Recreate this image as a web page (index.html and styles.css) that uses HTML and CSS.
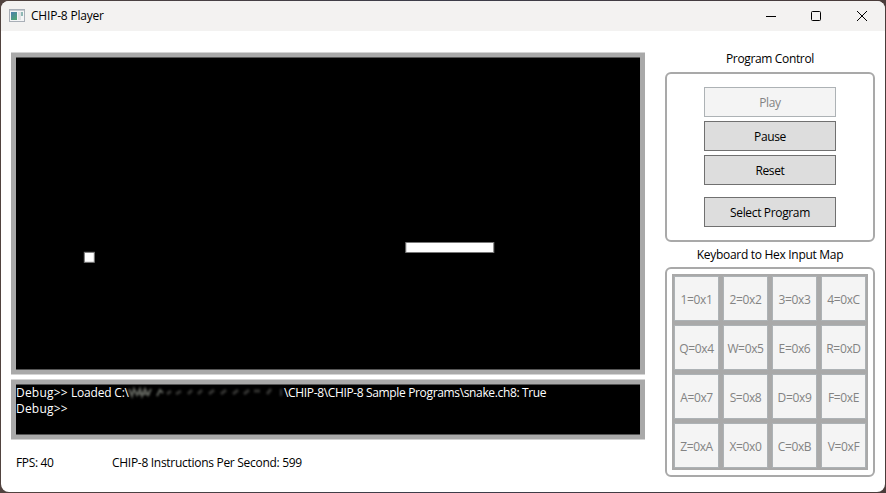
FILE: index.html
```html
<!DOCTYPE html>
<html lang="en">
<head>
<meta charset="utf-8">
<title>CHIP-8 Player</title>
<link rel="stylesheet" href="styles.css">
</head>
<body>
<div class="window">
  <header class="titlebar">
    <svg class="app-icon" width="16" height="14" viewBox="0 0 16 14"><defs><linearGradient id="g" x1="0" y1="0" x2="0.6" y2="1"><stop offset="0" stop-color="#4a7fae"/><stop offset="1" stop-color="#4fa377"/></linearGradient></defs><rect x=".5" y=".5" width="15" height="12" fill="#f4f5f6" stroke="#a9afb7"/><path d="M1 1.5h14" stroke="#c5c9cf"/><rect x="2" y="3" width="6" height="8" fill="url(#g)"/><rect x="9" y="3" width="3" height="8" fill="#e0e2e4"/><rect x="12" y="3" width="2" height="4" fill="#8fb8b5"/></svg>
    <span class="title">CHIP-8 Player</span>
    <svg class="caption" width="104" height="12" viewBox="0 0 104 12" fill="none" stroke="#000"><path d="M1 6.5h10"/><rect x="46.5" y="1.5" width="9" height="9" rx="1"/><path d="M92 1l10 10M102 1l-10 10"/></svg>
  </header>
  <main class="content">
    <section class="left">
      <div class="panel screen"><svg width="624" height="312" viewBox="16 57 624 312" fill="#fff" stroke="#777"><rect x="84.3" y="252.3" width="10" height="10"/><rect x="405.8" y="242.5" width="88" height="10"/></svg></div>
      <div class="panel debug">
        <div class="line"><span class="prompt">Debug&gt;&gt;</span><span class="load">Loaded C:\</span><svg class="smudge" width="156" height="14" viewBox="0 0 156 14" fill="none"><path d="M1 4l3 7 2-7 3 6 3-6 2 7 3-7 3 6 3-6M29 11l3-6 3 3M11 9h11" stroke="#5f625c" stroke-width="2"/><path d="M39 9l4-3m5 3l5-3m7 3l4-4m6 4l4-4m7 4l5-4m7 4l5-4m7 4l5-4m6 4l5-4m5 1h6m7 3l4-5" stroke="#343432" stroke-width="3"/><path d="M153 4v7" stroke="#6b6f75"/></svg><span class="path">\CHIP-8\CHIP-8 Sample Programs\snake.ch8: True</span></div>
        <div class="line"><span class="prompt">Debug&gt;&gt;</span></div>
      </div>
      <footer class="status"><span class="fps">FPS: 40</span><span class="ips">CHIP-8 Instructions Per Second: 599</span></footer>
    </section>
    <aside class="right">
      <h2 class="h-control">Program Control</h2>
      <div class="group controls">
        <button disabled>Play</button><button>Pause</button><button>Reset</button><button class="select">Select Program</button>
      </div>
      <h2 class="h-map">Keyboard to Hex Input Map</h2>
      <div class="group map"><div class="keys">
        <span>1=0x1</span><span>2=0x2</span><span>3=0x3</span><span>4=0xC</span>
        <span>Q=0x4</span><span>W=0x5</span><span>E=0x6</span><span>R=0xD</span>
        <span>A=0x7</span><span>S=0x8</span><span>D=0x9</span><span>F=0xE</span>
        <span>Z=0xA</span><span>X=0x0</span><span>C=0xB</span><span>V=0xF</span>
      </div></div>
    </aside>
  </main>
</div>
</body>
</html>
```
FILE: styles.css
```css
* { box-sizing: border-box; }
body {
  margin: 0;
  width: 886px;
  height: 493px;
  padding: 1px;
  overflow: hidden;
  background: linear-gradient(90deg, #51433f, #3c3d4a 50%, #4a3c3a);
  font: 12px/16px "Open Sans", "Noto Sans", sans-serif;
  letter-spacing: -0.35px;
  color: #000;
}
.window { width: 884px; height: 491px; border-radius: 8px; background: #fff; overflow: hidden; }
.titlebar { display: flex; align-items: center; height: 30px; padding: 0 16px 0 8px; background: #f3f2f1; }
.title { margin-left: 6px; letter-spacing: -0.2px; }
.caption { margin-left: auto; }
.content { display: flex; }
.left { width: 634px; margin-left: 10px; padding-top: 21px; }
.panel {
  border: 5px solid #a9a9a9;
  border-top-width: 4px;
  border-bottom-width: 4px;
  background: #000;
  box-shadow: 0 -1px #d4d4d4, 0 1px #d4d4d4, inset 0 1px #555, inset 0 -1px #555;
}
.screen { height: 321px; margin-top: 1px; }
.screen svg { display: block; }
.debug { height: 59px; margin-top: 6px; color: #fff; padding-top: 1px; }
.line { display: flex; height: 16px; white-space: pre; }
.prompt { width: 55px; letter-spacing: 0.2px; }
.load { width: 57px; letter-spacing: -0.2px; }
.smudge { filter: blur(1px); }
.status { display: flex; margin-top: 16px; padding-left: 5px; }
.fps { width: 96px; }
.ips { letter-spacing: -0.29px; }
.right { width: 210px; margin-left: 20px; padding-top: 20px; }
h2 { margin: 0; font: inherit; text-align: center; }
.h-map { letter-spacing: -0.3px; }
.group { border: 2px solid #a9a9a9; border-radius: 6px; }
.controls { display: flex; flex-direction: column; align-items: center; gap: 4px; height: 170px; margin-top: 4.5px; padding-top: 13.5px; }
button { width: 132px; height: 30px; padding: 1px 0 0; border: 1px solid #707070; background: #ddd; color: #000; font: inherit; letter-spacing: inherit; }
button:disabled { border-color: #adb2b5; background: #f4f4f4; color: #838383; }
.select { margin-top: 8px; }
.h-map { margin-top: 5.5px; }
.map { height: 210px; margin-top: 4px; padding: 5px; }
.keys { display: grid; grid-template-columns: repeat(4, 45px); grid-auto-rows: 45px; gap: 4px; padding: 2px; height: 196px; background: #a9a9a9; }
.keys span { display: grid; place-items: center; padding-top: 2px; border: 1px solid #adb2b5; background: #f4f4f4; color: #838383; }
```
